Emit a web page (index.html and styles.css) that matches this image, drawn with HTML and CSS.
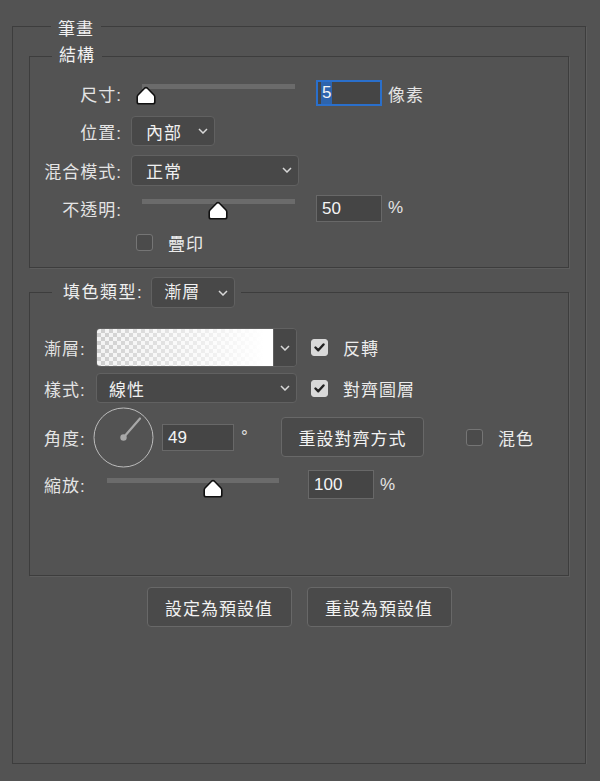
FILE: index.html
```html
<!DOCTYPE html>
<html lang="zh-Hant">

<head>
    <meta charset="UTF-8">
    <meta name="viewport" content="width=device-width, initial-scale=1.0">
    <title>筆畫</title>
    <link rel="stylesheet" href="styles.css">
</head>

<body>
    <fieldset class='panel'>
        <legend class='panel_title'><span>筆畫</span></legend>

        <!-- structure -->
        <fieldset class='group group_struct'>
            <legend class='group_title'>結構</legend>

            <div class='row r1'>
                <span class='lbl'>尺寸:</span>
                <div class='slider'>
                    <div class='track'></div>
                    <svg class='thumb' style='left: 0px' width='20' height='19' viewBox='0 0 20 19'>
                        <path d='M8.6 2.2 Q10 0.9 11.4 2.2 L18 9 Q18.8 9.8 18.8 11 V16 Q18.8 17.8 17 17.8 H3 Q1.2 17.8 1.2 16 V11 Q1.2 9.8 2 9 Z' fill='#fff' stroke='#111' stroke-width='1.6' stroke-linejoin='round' />
                    </svg>
                </div>
                <div class='field focus'><span class='sel'>5</span></div>
                <span class='unit'>像素</span>
            </div>

            <div class='row r2'>
                <span class='lbl'>位置:</span>
                <div class='dropdown w_short'>
                    <span>內部</span>
                    <svg width='10' height='6' viewBox='0 0 10 6'><path d='M1 1 L5 5 L9 1' fill='none' stroke='#d8d8d8' stroke-width='1.5' /></svg>
                </div>
            </div>

            <div class='row r3'>
                <span class='lbl'>混合模式:</span>
                <div class='dropdown w_long'>
                    <span>正常</span>
                    <svg width='10' height='6' viewBox='0 0 10 6'><path d='M1 1 L5 5 L9 1' fill='none' stroke='#d8d8d8' stroke-width='1.5' /></svg>
                </div>
            </div>

            <div class='row r4'>
                <span class='lbl'>不透明:</span>
                <div class='slider'>
                    <div class='track'></div>
                    <svg class='thumb' style='left: 72px' width='20' height='19' viewBox='0 0 20 19'>
                        <path d='M8.6 2.2 Q10 0.9 11.4 2.2 L18 9 Q18.8 9.8 18.8 11 V16 Q18.8 17.8 17 17.8 H3 Q1.2 17.8 1.2 16 V11 Q1.2 9.8 2 9 Z' fill='#fff' stroke='#111' stroke-width='1.6' stroke-linejoin='round' />
                    </svg>
                </div>
                <div class='field'>50</div>
                <span class='unit'>%</span>
            </div>

            <div class='row r5'>
                <span class='lbl'></span>
                <span class='check'></span>
                <span class='check_text'>疊印</span>
            </div>
        </fieldset>

        <!-- fill type -->
        <fieldset class='group group_fill'>
            <legend class='group_title fill_title'>
                <span>填色類型:</span>
                <div class='dropdown w_fill'>
                    <span>漸層</span>
                    <svg width='10' height='6' viewBox='0 0 10 6'><path d='M1 1 L5 5 L9 1' fill='none' stroke='#d8d8d8' stroke-width='1.5' /></svg>
                </div>
            </legend>

            <div class='row ra'>
                <span class='lbl2'>漸層:</span>
                <div class='picker'>
                    <div class='swatch'></div>
                    <div class='picker_btn'>
                        <svg width='10' height='6' viewBox='0 0 10 6'><path d='M1 1 L5 5 L9 1' fill='none' stroke='#d8d8d8' stroke-width='1.5' /></svg>
                    </div>
                </div>
                <span class='check on'>
                    <svg width='11' height='9' viewBox='0 0 11 9'><path d='M1.5 4.5 L4.3 7.3 L9.5 1.5' fill='none' stroke='#222' stroke-width='2.4' stroke-linecap='round' stroke-linejoin='round' /></svg>
                </span>
                <span class='check_text'>反轉</span>
            </div>

            <div class='row rb'>
                <span class='lbl2'>樣式:</span>
                <div class='dropdown w_style'>
                    <span>線性</span>
                    <svg width='10' height='6' viewBox='0 0 10 6'><path d='M1 1 L5 5 L9 1' fill='none' stroke='#d8d8d8' stroke-width='1.5' /></svg>
                </div>
                <span class='check on'>
                    <svg width='11' height='9' viewBox='0 0 11 9'><path d='M1.5 4.5 L4.3 7.3 L9.5 1.5' fill='none' stroke='#222' stroke-width='2.4' stroke-linecap='round' stroke-linejoin='round' /></svg>
                </span>
                <span class='check_text'>對齊圖層</span>
            </div>

            <div class='row rc'>
                <span class='lbl2 lbl_angle'>角度:</span>
                <svg class='dial' width='61' height='61' viewBox='0 0 61 61'>
                    <circle cx='30.5' cy='30.5' r='29.5' fill='none' stroke='#bcbcbc' stroke-width='1' />
                    <line x1='30.5' y1='30.5' x2='47' y2='11.5' stroke='#a8a8a8' stroke-width='2.2' stroke-linecap='round' />
                    <circle cx='30.5' cy='30.5' r='3.2' fill='#a8a8a8' />
                </svg>
                <div class='field f_angle'>49</div>
                <span class='deg'>°</span>
                <div class='btn btn_align'>重設對齊方式</div>
                <span class='check c_dither'></span>
                <span class='check_text'>混色</span>
            </div>

            <div class='row rd'>
                <span class='lbl2 lbl_scale'>縮放:</span>
                <div class='slider low'>
                    <div class='track'></div>
                    <svg class='thumb' style='left: 102px' width='20' height='19' viewBox='0 0 20 19'>
                        <path d='M8.6 2.2 Q10 0.9 11.4 2.2 L18 9 Q18.8 9.8 18.8 11 V16 Q18.8 17.8 17 17.8 H3 Q1.2 17.8 1.2 16 V11 Q1.2 9.8 2 9 Z' fill='#fff' stroke='#111' stroke-width='1.6' stroke-linejoin='round' />
                    </svg>
                </div>
                <div class='field f_scale'>100</div>
                <span class='unit'>%</span>
            </div>
        </fieldset>

        <div class='actions'>
            <div class='btn btn_default'>設定為預設值</div>
            <div class='btn btn_default'>重設為預設值</div>
        </div>
    </fieldset>
</body>

</html>
```

FILE: styles.css
```css
body {
    margin: 0;
    background: #535353;
    color: #e4e4e4;
    font-family: "Liberation Sans", "Noto Sans CJK TC", sans-serif;
    font-size: 17px;
    letter-spacing: 1px;
    user-select: none;
}

fieldset {
    margin: 0;
    min-inline-size: 0;
    border: 1px solid #3d3d3d;
    box-shadow: 1px 1px 0 #5d5d5d;
}

legend {
    margin-left: 22px;
    padding: 0 7px;
    line-height: 24px;
    color: #f0f0f0;
}

.panel {
    margin: 14px 14px 0 12px;
    padding: 0 16px;
    height: 750px;
    box-sizing: border-box;
}

.panel_title span {
    position: relative;
    top: 4px;
}

.group {
    padding: 0;
}

.group_struct {
    margin-top: 6px;
    padding: 6px 0 9px;
}

.group_fill {
    margin-top: 9px;
    padding: 20px 0 76px;
}

.group_fill .row {
    margin-left: 14px;
}

.fill_title {
    display: flex;
    align-items: center;
    padding: 0 6px 0 11px;
    letter-spacing: 1.5px;
}

.fill_title > span {
    margin-right: 8px;
}

.row {
    display: flex;
    align-items: center;
}

.r1 { height: 38px; }
.r2 { height: 38px; }
.r3 { height: 40px; }
.r4 { height: 36px; }
.r5 { height: 32px; }

.ra { height: 39px; }
.rb { height: 30px; margin-top: 6px; }
.rc { height: 60px; margin-top: 4px; }
.rd { height: 29px; margin-top: 3px; }

.lbl {
    width: 92px;
    margin-right: 9px;
    text-align: right;
    white-space: nowrap;
}

.lbl2 {
    width: 52px;
    white-space: nowrap;
}

.lbl_angle {
    width: 49px;
}

.lbl_scale {
    width: 57px;
}

/* slider */
.slider {
    position: relative;
    width: 164px;
    height: 28px;
    margin-left: 5px;
}

.slider .track {
    position: absolute;
    left: 6px;
    right: 5px;
    top: 5px;
    height: 5px;
    background: #6b6b6b;
}

.slider .thumb {
    position: absolute;
    top: 7px;
}

.slider.low {
    width: 183px;
    margin-left: 0;
}

.slider.low .track {
    top: 7px;
}

.slider.low .thumb {
    top: 8px;
}

/* text fields */
.field {
    box-sizing: border-box;
    width: 66px;
    height: 27px;
    margin-left: 16px;
    padding: 0 5px;
    background: #454545;
    border: 1px solid #686868;
    color: #f4f4f4;
    line-height: 25px;
    letter-spacing: 0;
}

.field.focus {
    height: 26px;
    padding: 0 3px;
    border: 2px solid #2a6fcb;
    line-height: 22px;
}

.field .sel {
    display: inline-block;
    height: 22px;
    padding: 0 1px;
    background: #2d64ad;
}

.f_angle {
    width: 72px;
    margin-left: 8px;
}

.f_scale {
    height: 29px;
    margin-left: 24px;
    line-height: 27px;
}

.unit {
    margin-left: 6px;
}

.deg {
    width: 47px;
    padding-left: 7px;
    box-sizing: border-box;
    align-self: flex-start;
    margin-top: 20px;
}

/* dropdowns */
.dropdown {
    box-sizing: border-box;
    display: flex;
    align-items: center;
    justify-content: space-between;
    padding: 0 6px 0 14px;
    background: #484848;
    border: 1px solid #616161;
    border-radius: 4px;
    color: #f0f0f0;
    letter-spacing: 1px;
}

.w_short { width: 84px; height: 30px; }
.w_long { width: 168px; height: 31px; }
.w_fill { width: 84px; height: 31px; padding-left: 12px; }
.w_style { width: 201px; height: 30px; padding-left: 12px; }

/* gradient picker */
.picker {
    display: flex;
    width: 201px;
    height: 39px;
    box-sizing: border-box;
    border: 1px solid #616161;
    border-radius: 4px;
    overflow: hidden;
}

.swatch {
    width: 176px;
    background:
        linear-gradient(to right, rgba(255, 255, 255, 0), #fff 95%),
        repeating-conic-gradient(#cfcfcf 0 25%, #f4f4f4 0 50%) 0 0 / 8px 8px;
}

.picker_btn {
    flex: 1;
    display: grid;
    place-items: center;
    background: #474747;
    border-left: 1px solid #616161;
}

/* checkboxes */
.check {
    box-sizing: border-box;
    width: 17px;
    height: 17px;
    margin-left: 5px;
    border: 1.5px solid #757575;
    border-radius: 3px;
    background: #4b4b4b;
    display: grid;
    place-items: center;
}

.check.on {
    margin-left: 14px;
    background: #d9d9d9;
    border-color: #d9d9d9;
}

.check_text {
    margin-left: 15px;
    color: #ececec;
}

.c_dither {
    margin-left: 42px;
}

/* dial */
.dial {
    display: block;
}

/* buttons */
.btn {
    box-sizing: border-box;
    height: 40px;
    display: grid;
    place-items: center;
    background: #4a4a4a;
    border: 1px solid #686868;
    border-radius: 4px;
    color: #f2f2f2;
}

.btn_align {
    width: 143px;
}

.btn_default {
    width: 145px;
}

.actions {
    display: flex;
    justify-content: center;
    gap: 15px;
    margin-top: 11px;
}
```
